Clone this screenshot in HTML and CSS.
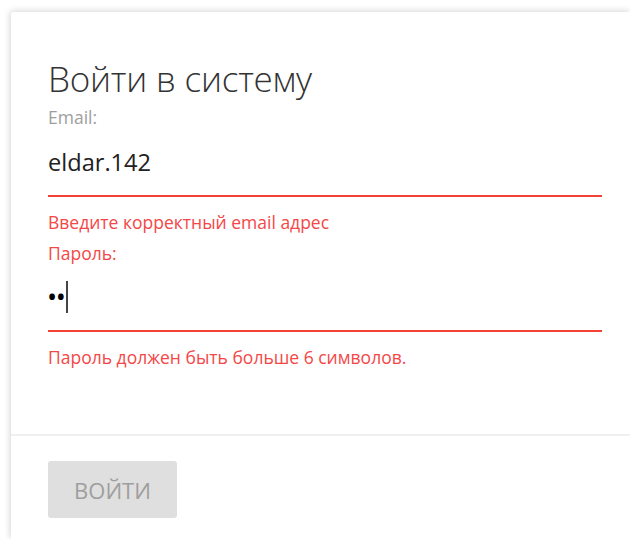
FILE: index.html
```html
<!DOCTYPE html>
<html lang="ru">
<head>
<meta charset="utf-8">
<title>Вход</title>
<link rel="stylesheet" href="styles.css">
</head>
<body>
<div class="card">
  <form class="card-body">
    <h1 class="title">Войти в систему</h1>
    <div class="field">
      <label class="label">Email:</label>
      <div class="control invalid"><span class="value">eldar.142</span></div>
      <div class="error">Введите корректный email адрес</div>
    </div>
    <div class="field">
      <label class="label label-invalid">Пароль:</label>
      <div class="control invalid"><span class="value dots">••</span><span class="caret"></span></div>
      <div class="error">Пароль должен быть больше 6 символов.</div>
    </div>
  </form>
  <div class="card-actions">
    <button class="btn" type="button" disabled>ВОЙТИ</button>
  </div>
</div>
</body>
</html>
```
FILE: styles.css
```css
html, body {
  margin: 0;
  padding: 0;
  background: #fff;
  overflow: hidden;
  height: 100%;
}

body {
  font-family: "Open Sans", "Noto Sans", sans-serif;
  color: #212121;
}

.card {
  margin: 12px 0 0 11px;
  width: 619px;
  height: 527px;
  background: #fff;
  border-radius: 3px 0 0 0;
  box-shadow: -1px -1px 6px rgba(0, 0, 0, 0.17);
}

.card-body {
  padding: 45px 0 66px 37px;
  width: 554px;
}

.title {
  margin: 0;
  font-size: 35px;
  font-weight: 300;
  line-height: 44px;
  color: #333;
  letter-spacing: -0.2px;
}

.label {
  display: block;
  font-size: 17.5px;
  line-height: 22px;
  color: #9e9e9e;
  margin-top: 5px;
}

.field + .field .label {
  margin-top: 9px;
}

.label-invalid {
  color: #f44747;
}

.control {
  display: flex;
  align-items: center;
  height: 67px;
  border-bottom: 2px solid #f44336;
}

.field + .field .control {
  height: 66px;
}

.value {
  font-size: 23.6px;
  color: #212121;
}

.dots {
  font-size: 27px;
  line-height: 32px;
  letter-spacing: -1.5px;
  color: #000;
  margin-left: -1px;
}

.caret {
  display: inline-block;
  width: 1.5px;
  height: 32px;
  background: #444;
  margin-left: 2px;
}

.error {
  font-size: 17.5px;
  line-height: 22px;
  color: #f44747;
  margin-top: 14px;
}

.card-actions {
  border-top: 2px solid #f0f0f0;
  padding: 25px 0 0 37px;
}

.btn {
  display: block;
  width: 129px;
  height: 57px;
  border: none;
  border-radius: 3px;
  background: #dfdfdf;
  color: #9e9e9e;
  font-family: "Open Sans", "Noto Sans", sans-serif;
  font-size: 22px;
  padding: 0;
}
```
